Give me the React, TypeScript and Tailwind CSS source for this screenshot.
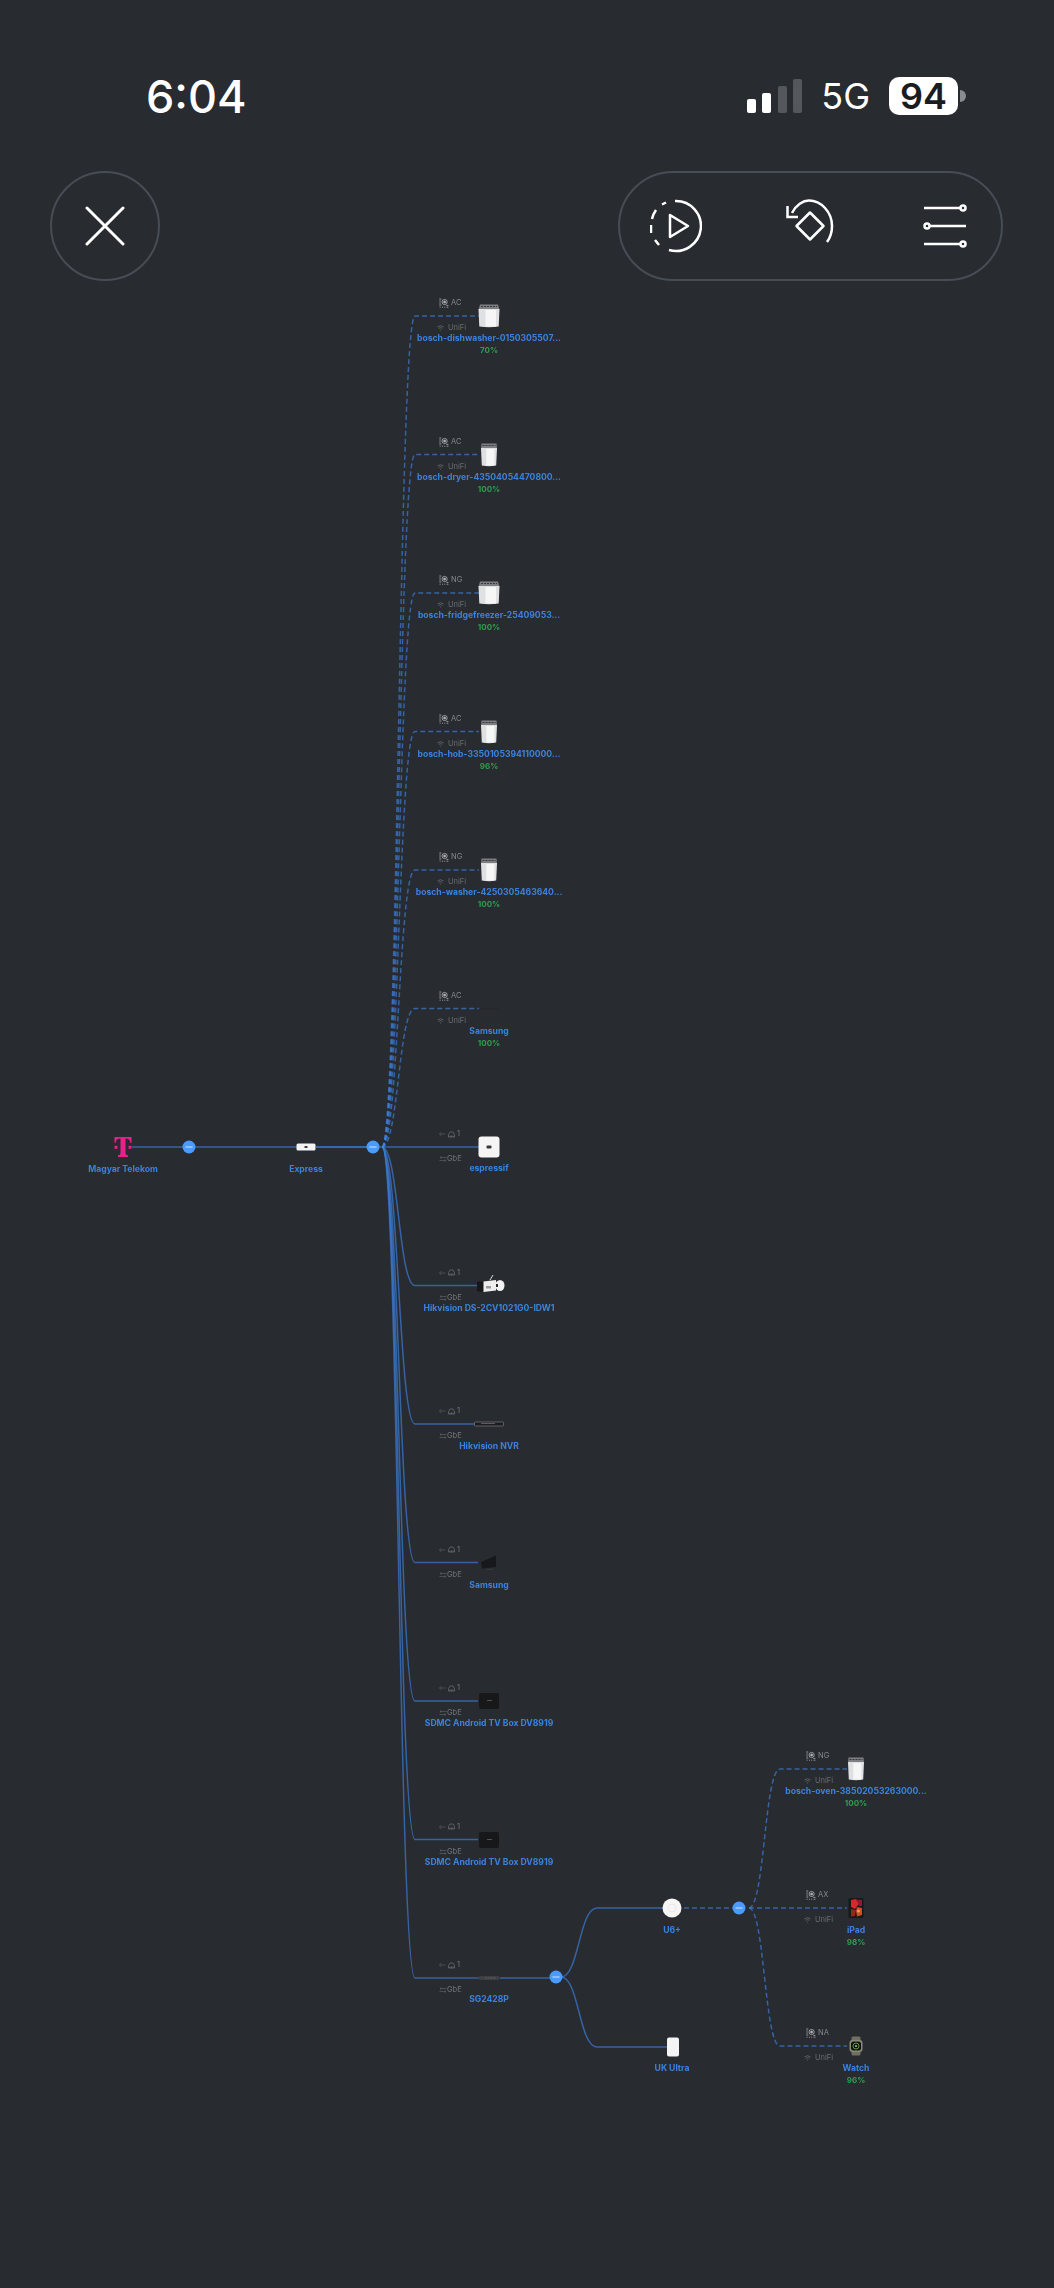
import type { ReactNode } from "react";

const TOP = 290;
const BLUE = "#3f86e8";

const rowY = (i: number) => 316 + 138.5 * i;

const hubX = 382;
const cornerX = 415;
const deviceX = 489;

const curve = (sx: number, sy: number, cx: number, ex: number, ty: number) => {
  const m = (sx + cx) / 2;
  return `M${sx} ${sy - TOP}C${m} ${sy - TOP} ${m} ${ty - TOP} ${cx} ${ty - TOP}L${ex} ${ty - TOP}`;
};

const Edges = () => {
  const up = [0, 1, 2, 3, 4, 5];
  const down = [7, 8, 9, 10, 11, 12];
  const hubY = rowY(6);
  return (
    <svg className="absolute left-0 top-0" width="1054" height="1998" fill="none" strokeWidth="1.5">
      <g stroke={BLUE} strokeOpacity="0.62">
        <path d={`M132 ${hubY - TOP}L297 ${hubY - TOP}`} />
        <path d={`M316 ${hubY - TOP}L367 ${hubY - TOP}`} strokeOpacity="0.9" />
        <path d={`M379 ${hubY - TOP}L479 ${hubY - TOP}`} />
        {down.map((i) => (
          <path key={i} d={curve(hubX, hubY, cornerX, i === 12 ? 479 : 478, rowY(i))} />
        ))}
        <path d={`M500 ${rowY(12) - TOP}L550 ${rowY(12) - TOP}`} />
        <path d={curve(561, 1977, 597, 664, 1908)} />
        <path d={curve(561, 1977, 597, 667, 2047)} />
      </g>
      <g stroke={BLUE} strokeOpacity="0.62" strokeDasharray="5 3">
        {up.map((i) => (
          <path key={i} d={curve(hubX, hubY, cornerX, 479, rowY(i))} />
        ))}
        <path d={`M684 ${1908 - TOP}L733 ${1908 - TOP}`} />
        <path d={curve(749, 1908, 780, 847, 1769)} />
        <path d={`M749 ${1908 - TOP}L847 ${1908 - TOP}`} />
        <path d={curve(749, 1908, 780, 847, 2046)} />
      </g>
    </svg>
  );
};

const Hub = ({ x, y }: { x: number; y: number }) => (
  <div
    className="absolute flex h-[13px] w-[13px] -translate-x-1/2 -translate-y-1/2 items-center justify-center rounded-full bg-[#4a9bff]"
    style={{ left: x, top: y - TOP }}
  >
    <div className="h-px w-[7px] bg-[#cfe3ff]" />
  </div>
);

const Device = ({ x, y, children }: { x: number; y: number; children: ReactNode }) => (
  <svg
    className="absolute -translate-x-1/2 -translate-y-1/2"
    style={{ left: x, top: y - TOP }}
    width="40"
    height="32"
    viewBox="-20 -16 40 32"
  >
    {children}
  </svg>
);

const Label = ({ x, y, name, pct }: { x: number; y: number; name: string; pct?: string }) => (
  <div
    className="absolute flex -translate-x-1/2 flex-col items-center whitespace-nowrap"
    style={{ left: x, top: y - TOP + 16 }}
  >
    <span className="text-[8.6px] font-bold leading-[13px] text-[#3b82e0]">{name}</span>
    {pct && <span className="text-[8px] font-bold leading-[10px] text-[#2f9e4f]">{pct}</span>}
  </div>
);

const WifiStdIcon = () => (
  <svg width="10" height="10" viewBox="0 0 10 10" fill="none" stroke="#b4b6b9" strokeWidth="0.8">
    <circle cx="5.6" cy="4" r="2.6" />
    <circle cx="5.6" cy="4" r="1" fill="#b4b6b9" />
    <path d="M0.3 1h2M0.3 3h1.5M0.3 5h1.5M0.3 7h2M0.6 9.2h1M3 9.2h1M5.2 9.2h1M7.6 9.2h1.8M7.4 7.4h2" />
  </svg>
);

const WifiIcon = () => (
  <svg width="7" height="6" viewBox="0 0 14 12" fill="none" stroke="#63666a" strokeWidth="1.8">
    <path d="M1 4a9 9 0 0 1 12 0M3.500 6.800a5.400 5.400 0 0 1 7 0" />
    <circle cx="7" cy="10" r="1.2" fill="#63666a" stroke="none" />
  </svg>
);

const WirelessTags = ({ x, y, std }: { x: number; y: number; std: string }) => (
  <>
    <div
      className="absolute flex items-center gap-[2px] text-[7.5px] leading-[10px] text-[#85888c]"
      style={{ left: x - 50, top: y - TOP - 18 }}
    >
      <WifiStdIcon />
      <span>{std}</span>
    </div>
    <div
      className="absolute flex items-center gap-[4px] text-[7.5px] leading-[10px] text-[#696c70]"
      style={{ left: x - 52, top: y - TOP + 7 }}
    >
      <WifiIcon />
      <span>UniFi</span>
    </div>
  </>
);

const WiredTags = ({ x, y }: { x: number; y: number }) => (
  <>
    <div
      className="absolute flex items-center gap-[2px] text-[7.5px] leading-[10px] text-[#74777b]"
      style={{ left: x - 50, top: y - TOP - 18 }}
    >
      <svg width="7" height="6" viewBox="0 0 14 12" fill="none" stroke="#606367" strokeWidth="1.2">
        <path d="M13 6H1M5 2L1 6l4 4" />
      </svg>
      <svg width="7" height="7" viewBox="0 0 14 14" fill="none" stroke="#74777b" strokeWidth="1.3">
        <path d="M1 12V7l3-5h6l3 5v5zM4 12V9M7 12V9M10 12V9" />
      </svg>
      <span>1</span>
    </div>
    <div
      className="absolute flex items-center text-[7.5px] leading-[10px] text-[#74777b]"
      style={{ left: x - 50, top: y - TOP + 7 }}
    >
      <svg width="8" height="6" viewBox="0 0 16 12" fill="none" stroke="#606367" strokeWidth="1.3">
        <path d="M15 3H2M5 0.5L2 3l3 2.500M1 9h13M11 6.500L14 9l-3 2.500" />
      </svg>
      <span>GbE</span>
    </div>
  </>
);

const TelekomLogo = () => (
  <g fill="#e8218a">
    <path d="M-8.500 -10H8.500V-4H7.400C7.200 -6.700 5.800 -8.400 2.500 -8.400V5.800C2.500 7.500 3.200 8.300 5 8.300V10H-5V8.300C-3.200 8.300 -2.500 7.500 -2.500 5.800V-8.400C-5.800 -8.400 -7.200 -6.700 -7.400 -4H-8.500Z" />
    <rect x="-8.500" y="-1.200" width="3" height="3" />
    <rect x="5.500" y="-1.200" width="3" height="3" />
  </g>
);

const Dishwasher = ({ wide }: { wide: boolean }) => {
  const w = wide ? 10.5 : 8;
  const t = wide ? 9 : 7.5;
  return (
    <g>
      <path d={`M${-t} -11.500H${t}L${w} -6H${-w}Z`} fill="#7d7f82" />
      <path d={`M${-w} -7H${w}L${w - 0.8} 10.500Q0 12 ${-w + 0.8} 10.500Z`} fill="#dfe0e1" />
      <path d={`M${-w / 3} -6H${w / 1.5}V10.500H${-w / 3}Z`} fill="#f6f6f6" />
      <path d={`M${-t + 1} -9.500H${t - 1}`} stroke="#33363a" strokeWidth="1" strokeDasharray="2 1" />
    </g>
  );
};

const Camera = () => (
  <g>
    <rect x="-12" y="-4.500" width="7" height="10" rx="1" fill="#17181a" />
    <path d="M-5.500 -4.500L7 -6V4.500L-5.500 6Z" fill="#eeeeee" />
    <rect x="-3" y="0" width="5" height="2.500" fill="#9a9b9d" />
    <path d="M1 -6L4 -11" stroke="#dddddd" strokeWidth="1" />
    <ellipse cx="11" cy="-0.500" rx="4.500" ry="5.500" fill="#f2f2f2" />
    <rect x="7" y="-2" width="2" height="3" fill="#26282b" />
  </g>
);

const Ipad = () => (
  <g>
    <rect x="-7.500" y="-10" width="15" height="20" rx="1.500" fill="#17181a" />
    <path d="M-5 -8L0 -9L3 -4L-1 1L-5 -1Z" fill="#d8262a" />
    <path d="M1 -8.500L6 -8V-2L3 -2Z" fill="#8f1a33" />
    <path d="M-5 1L0 2L-1 8L-5 8.500Z" fill="#8c2a1c" />
    <path d="M1 -1L6 0V7L1 8.500L0 3Z" fill="#d24a26" />
    <circle cx="2.500" cy="3" r="1.500" fill="#f1a33a" />
  </g>
);

const Watch = () => (
  <g>
    <rect x="-4.500" y="-9.500" width="9" height="19" rx="1.500" fill="#6f7060" />
    <rect x="-6.500" y="-6" width="13" height="12" rx="3" fill="#8a8a76" />
    <rect x="-5" y="-4.500" width="10" height="9" rx="2.500" fill="#101211" />
    <circle cx="0" cy="0" r="3" fill="none" stroke="#5f9a3c" strokeWidth="1" />
    <circle cx="0" cy="0" r="1" fill="#b8c56a" />
  </g>
);

const Diagram = () => {
  const y0 = rowY(6);
  const wireless = [
    { name: "bosch-dishwasher-0150305507...", std: "AC", pct: "70%" },
    { name: "bosch-dryer-43504054470800...", std: "AC", pct: "100%" },
    { name: "bosch-fridgefreezer-25409053...", std: "NG", pct: "100%" },
    { name: "bosch-hob-3350105394110000...", std: "AC", pct: "96%" },
    { name: "bosch-washer-4250305463640...", std: "NG", pct: "100%" },
    { name: "Samsung", std: "AC", pct: "100%" },
  ];
  const wired = ["espressif", "Hikvision DS-2CV1021G0-IDW1", "Hikvision NVR", "Samsung", "SDMC Android TV Box DV8919", "SDMC Android TV Box DV8919", "SG2428P"];
  return (
    <div className="relative h-[1998px] w-full blur-[0.4px]">
      <Edges />

      <Device x={123} y={y0}>
        <TelekomLogo />
      </Device>
      <Label x={123} y={y0} name="Magyar Telekom" />
      <Hub x={189} y={y0} />
      <Device x={306} y={y0}>
        <rect x="-9.500" y="-3.500" width="19" height="7" rx="1.500" fill="#f4f4f4" />
        <rect x="-1.500" y="-1" width="3" height="2" rx="0.500" fill="#3a3d42" />
      </Device>
      <Label x={306} y={y0} name="Express" />
      <Hub x={373} y={y0} />

      {wireless.map((d, i) => (
        <div key={i}>
          <WirelessTags x={deviceX} y={rowY(i)} std={d.std} />
          {i < 5 ? (
            <Device x={deviceX} y={rowY(i)}>
              <Dishwasher wide={i === 0 || i === 2} />
            </Device>
          ) : (
            <Device x={deviceX} y={rowY(i)}>
              <path d="M-9 0H10" stroke="#26282b" strokeWidth="1.500" />
            </Device>
          )}
          <Label x={deviceX} y={rowY(i)} name={d.name} pct={d.pct} />
        </div>
      ))}

      {wired.map((name, i) => (
        <div key={i}>
          <WiredTags x={deviceX} y={rowY(i + 6)} />
          <Label x={deviceX} y={rowY(i + 6) - (i === 0 || i === 6 ? 1 : 0)} name={name} />
        </div>
      ))}

      <Device x={489} y={rowY(6)}>
        <rect x="-10.500" y="-10.500" width="21" height="21" rx="3" fill="#f5f5f5" />
        <rect x="-2.500" y="-1.500" width="5" height="3" rx="1" fill="#33363a" />
      </Device>
      <Device x={489} y={rowY(7)}>
        <Camera />
      </Device>
      <Device x={489} y={rowY(8)}>
        <rect x="-14.500" y="-2" width="29" height="4" rx="0.500" fill="#1c1d1f" stroke="#6e7074" strokeWidth="0.800" />
        <path d="M-8 -0.500H6" stroke="#85878b" strokeWidth="0.600" />
      </Device>
      <Device x={489} y={rowY(9)}>
        <path d="M-8 -1L7 -7.500V4L-7 5.500Z" fill="#17181a" />
        <path d="M-3 6.500H4" stroke="#3a3c40" strokeWidth="0.800" />
      </Device>
      {[10, 11].map((i) => (
        <Device key={i} x={489} y={rowY(i)}>
          <rect x="-10" y="-8" width="20" height="16" rx="2" fill="#17181a" />
          <path d="M-2 -0.500H3" stroke="#6a6c70" strokeWidth="0.700" />
        </Device>
      ))}
      <Device x={489} y={rowY(12)}>
        <rect x="-10.500" y="-2" width="21" height="4" rx="1.500" fill="#3d3f43" />
        <path d="M-4 0H7" stroke="#6f7175" strokeWidth="0.800" strokeDasharray="1 0.500" />
      </Device>
      <Hub x={556} y={1977} />

      <Device x={672} y={1908}>
        <circle r="9.500" fill="#f6f6f6" />
        <circle r="4" fill="none" stroke="#dcdde0" strokeWidth="0.600" />
      </Device>
      <Label x={672} y={1908} name="U6+" />
      <Hub x={739} y={1908} />
      <Device x={673} y={2047}>
        <rect x="-6" y="-9.500" width="12" height="19" rx="2" fill="#f4f4f4" />
      </Device>
      <Label x={672} y={2046} name="UK Ultra" />

      <WirelessTags x={856} y={1769} std="NG" />
      <Device x={856} y={1769}>
        <Dishwasher wide={false} />
      </Device>
      <Label x={856} y={1769} name="bosch-oven-38502053263000..." pct="100%" />

      <WirelessTags x={856} y={1908} std="AX" />
      <Device x={856} y={1908}>
        <Ipad />
      </Device>
      <Label x={856} y={1908} name="iPad" pct="98%" />

      <WirelessTags x={856} y={2046} std="NA" />
      <Device x={856} y={2046}>
        <Watch />
      </Device>
      <Label x={856} y={2046} name="Watch" pct="96%" />
    </div>
  );
};

const StatusBar = () => (
  <div className="flex h-[40px] items-center justify-between pl-[146px] pr-[88px]">
    <span className="text-[45px] font-medium leading-none text-white">6:04</span>
    <div className="flex items-center">
      <div className="flex items-end gap-[6.500px]">
        <div className="h-[14px] w-[9px] rounded-[2px] bg-white" />
        <div className="h-[20px] w-[9px] rounded-[2px] bg-white" />
        <div className="h-[27px] w-[9px] rounded-[2px] bg-[#54575b]" />
        <div className="h-[34px] w-[9px] rounded-[2px] bg-[#54575b]" />
      </div>
      <span className="ml-[19px] text-[36px] leading-none text-white">5G</span>
      <div className="ml-[19px] flex h-[38px] w-[69px] items-center justify-center rounded-[10px] bg-white text-[36px] font-semibold leading-none text-[#1b1c1f]">
        94
      </div>
      <div className="ml-[2px] h-[12px] w-[6px] rounded-r-full bg-[#8a8c8f]" />
    </div>
  </div>
);

const Toolbar = () => (
  <div className="mt-[55px] flex items-center justify-between pl-[50px] pr-[51px]">
    <div className="flex h-[110px] w-[110px] items-center justify-center rounded-full border-2 border-[#474d55]">
      <svg width="40" height="40" viewBox="0 0 40 40" fill="none" stroke="white" strokeWidth="3" strokeLinecap="round">
        <path d="M2 2L38 38M38 2L2 38" />
      </svg>
    </div>
    <div className="flex h-[110px] w-[385px] items-center justify-between rounded-full border-2 border-[#474d55] pl-[30px] pr-[33px]">
      <svg width="52" height="54" viewBox="0 0 52 54" fill="none" stroke="white" strokeWidth="2.500">
        <path d="M25 2A25 25 0 1 1 19 51" />
        <path d="M16 3.500L12 5.500M6 11A25 25 0 0 0 2 20M1 26V34M5 41L9 46" />
        <path d="M20 16V38L38 27Z" strokeLinejoin="round" />
      </svg>
      <svg width="52" height="54" viewBox="0 0 52 54" fill="none" stroke="white" strokeWidth="2.500">
        <path d="M6 14C10 6 17 1.500 23 1.500C35 1.500 46 13 46 27C46 33 44 39 41 43" />
        <path d="M1.500 7V18H12" />
        <path d="M24 13.500L37.500 27L24 40.500L10.500 27Z" strokeLinejoin="round" />
      </svg>
      <svg width="46" height="44" viewBox="0 0 46 44" fill="none" stroke="white" strokeWidth="2.500">
        <path d="M2 4H38M8 22H44M2 40H38" />
        <circle cx="41" cy="4" r="2.500" />
        <circle cx="5" cy="22" r="2.500" />
        <circle cx="41" cy="40" r="2.500" />
      </svg>
    </div>
  </div>
);

export default function App() {
  return (
    <div className="h-[2288px] w-[1054px] overflow-hidden bg-[#282b30] pt-[76px] font-['Inter',sans-serif]">
      <StatusBar />
      <Toolbar />
      <div className="mt-[9px]">
        <Diagram />
      </div>
    </div>
  );
}
